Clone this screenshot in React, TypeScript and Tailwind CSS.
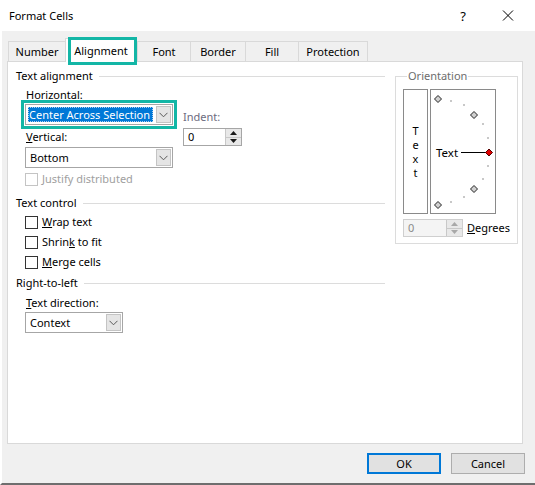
import React from "react";

/**
 * Format Cells dialog — Alignment tab, with teal call-out boxes.
 */

const FONT = { fontFamily: '"Noto Sans", "Open Sans", sans-serif' };

const TABS = [
  { label: "Number", w: "w-[57px]" },
  { label: "Alignment", w: "w-[72px]", active: true },
  { label: "Font", w: "w-[53px]" },
  { label: "Border", w: "w-[55px]" },
  { label: "Fill", w: "w-[53px]" },
  { label: "Protection", w: "w-[70px]", last: true },
];

function Chevron() {
  return (
    <svg width="9" height="6" viewBox="0 0 9 6">
      <path d="M0.5 0.8 L4.5 4.8 L8.5 0.8" fill="none" stroke="#5a5a5a" strokeWidth="1" />
    </svg>
  );
}

function Combo({
  value,
  className,
  selected,
}: {
  value: string;
  className: string;
  selected?: boolean;
}) {
  return (
    <div className={`flex h-[21px] border border-[#a6a6a6] bg-white ${className}`}>
      <div className="flex flex-1 items-center p-[2px]">
        {selected ? (
          <span className="flex h-full flex-1 items-center whitespace-nowrap bg-[#0078d7] pl-[1px] text-white outline-1 outline-dotted outline-[#b0d0f0] -outline-offset-1">
            {value}
          </span>
        ) : (
          <span className="whitespace-nowrap pl-[2px]">{value}</span>
        )}
      </div>
      <div className="m-px flex w-[15px] items-center justify-center border border-[#c4c4c4] bg-[#e5e5e5]">
        <Chevron />
      </div>
    </div>
  );
}

function Arrow({ up, color }: { up?: boolean; color: string }) {
  return (
    <svg width="7" height="4" viewBox="0 0 7 4">
      <path d={up ? "M0 4 L3.5 0 L7 4 Z" : "M0 0 L3.5 4 L7 0 Z"} fill={color} />
    </svg>
  );
}

function Spin({ disabled }: { disabled?: boolean }) {
  const c = disabled ? "#a8a8a8" : "#1a1a1a";
  return (
    <div className="flex w-[16px] flex-col border-l border-[#c8c8c8]">
      <div className="flex flex-1 items-center justify-center border-b border-[#c8c8c8] bg-[#e8e8e8]">
        <Arrow up color={c} />
      </div>
      <div className="flex flex-1 items-center justify-center bg-[#e8e8e8]">
        <Arrow color={c} />
      </div>
    </div>
  );
}

function Heading({ children }: { children: React.ReactNode }) {
  return (
    <div className="flex h-[16px] items-center gap-[6px]">
      <span className="whitespace-nowrap">{children}</span>
      <div className="h-px flex-1 bg-[#dcdcdc]" />
    </div>
  );
}

function Check({ children, disabled }: { children: React.ReactNode; disabled?: boolean }) {
  return (
    <div className="flex h-[20px] items-center gap-[4px]">
      <div
        className={`h-[13px] w-[13px] border bg-white ${
          disabled ? "border-[#c4c4c4]" : "border-[#333333]"
        }`}
      />
      <span className={`whitespace-nowrap ${disabled ? "text-[#a0a0a0]" : ""}`}>{children}</span>
    </div>
  );
}

function Dial() {
  const diamonds = [
    [7, 9],
    [43, 25],
    [43, 99],
    [7, 115],
  ];
  const dots = [
    [20, 11],
    [33, 15],
    [52, 34],
    [57, 48],
    [57, 76],
    [52, 89],
    [33, 107],
    [20, 112],
  ];
  const d = (x: number, y: number) =>
    `M${x} ${y - 3.5} L${x + 3.5} ${y} L${x} ${y + 3.5} L${x - 3.5} ${y} Z`;
  return (
    <svg width="64" height="123" viewBox="0 0 64 123">
      {dots.map(([x, y], i) => (
        <rect key={i} x={x - 1} y={y - 1} width="2" height="2" fill="#c8c8c8" />
      ))}
      {diamonds.map(([x, y], i) => (
        <path key={i} d={d(x, y)} fill="#d0d0d0" stroke="#222" strokeWidth="1" />
      ))}
      <text x="5" y="66.5" fontSize="11.5" fill="#000" style={FONT}>
        Text
      </text>
      <line x1="30" y1="62.5" x2="55" y2="62.5" stroke="#000" strokeWidth="1" />
      <path d={d(58, 62.5)} fill="#e00000" stroke="#500" strokeWidth="1" />
    </svg>
  );
}

export default function App() {
  return (
    <div
      className="flex h-[485px] w-[535px] flex-col border-b-2 border-l-2 border-b-[#6e6e6e] border-l-white bg-[#f0f0f0] text-[11px] leading-[16px] text-black"
      style={FONT}
    >
      {/* Title bar */}
      <div className="flex h-[31px] items-center bg-white pl-[7px]">
        <span>Format Cells</span>
        <div className="ml-auto flex items-center gap-[25px] pr-[17px]">
          <span className="flex w-[20px] justify-center text-[13px]">?</span>
          <svg width="20" height="11" viewBox="0 0 20 11">
            <path d="M5 0.5 L15 10.5 M15 0.5 L5 10.5" stroke="#000" strokeWidth="1" />
          </svg>
        </div>
      </div>

      {/* Tabs */}
      <div className="ml-[6px] mt-[7px] flex h-[23px] items-end">
        {TABS.map((t) =>
          t.active ? (
            <div
              key={t.label}
              className={`relative z-10 -mb-px flex h-[24px] items-center justify-center border-x border-t border-[#d9d9d9] bg-white ${t.w}`}
            >
              {t.label}
              <span className="pointer-events-none absolute left-[2px] top-[-2px] h-[28px] w-[69px] border-[3px] border-[#13b6a6]" />
            </div>
          ) : (
            <div
              key={t.label}
              className={`flex h-[20px] items-center justify-center border-l border-t border-[#d9d9d9] ${
                t.last ? "border-r" : ""
              } ${t.w}`}
            >
              {t.label}
            </div>
          )
        )}
      </div>

      {/* Panel */}
      <div className="ml-[5px] flex h-[383px] w-[516px] border border-[#d9d9d9] bg-white pl-[8px]">
        {/* Left column */}
        <div className="flex w-[369px] flex-col pt-[6px]">
          <Heading>Text alignment</Heading>
          <div className="mt-[3px] flex pl-[9px]">
            <div className="flex w-[148px] flex-col">
              <span className="pl-px">Horizontal:</span>
              <div className="relative mt-px">
                <Combo value="Center Across Selection" className="w-[148px]" selected />
                <span className="pointer-events-none absolute left-[-4px] top-[-4px] h-[29px] w-[156px] border-[3px] border-[#13b6a6]" />
              </div>
              <span className="mt-[4px] pl-px">
                <u>V</u>ertical:
              </span>
              <Combo value="Bottom" className="mt-[2px] w-[148px]" />
              <div className="mt-[1px]">
                <Check disabled>Justify distributed</Check>
              </div>
            </div>
            <div className="ml-[10px] flex flex-col pt-[22px]">
              <span className="text-[#6d6b80]">Indent:</span>
              <div className="mt-[3px] flex h-[18px] w-[59px] border border-[#a6a6a6]">
                <span className="flex flex-1 items-center pl-[4px]">0</span>
                <Spin />
              </div>
            </div>
          </div>

          <div className="mt-[6px]">
            <Heading>Text control</Heading>
          </div>
          <div className="mt-[1px] flex flex-col pl-[9px]">
            <Check>
              <u>W</u>rap text
            </Check>
            <Check>
              Shrin<u>k</u> to fit
            </Check>
            <Check>
              <u>M</u>erge cells
            </Check>
          </div>

          <div className="mt-[3px]">
            <Heading>Right-to-left</Heading>
          </div>
          <div className="mt-[4px] flex flex-col pl-[9px]">
            <span className="pl-px">
              <u>T</u>ext direction:
            </span>
            <Combo value="Context" className="mt-px w-[98px]" />
          </div>
        </div>

        {/* Orientation */}
        <fieldset className="ml-[10px] mt-[6px] h-[176px] w-[120px] self-start border border-[#dcdcdc] px-[7px] pb-[6px]">
          <legend className="ml-[4px] px-px text-[#6d6d6d]">Orientation</legend>
          <div className="mt-[5px] flex gap-[2px]">
            <div className="flex h-[125px] w-[25px] flex-col items-center justify-center border border-[#8a8a8a]">
              <span className="leading-[14px]">T</span>
              <span className="leading-[14px]">e</span>
              <span className="leading-[14px]">x</span>
              <span className="leading-[14px]">t</span>
            </div>
            <div className="h-[125px] w-[66px] border border-[#8a8a8a]">
              <Dial />
            </div>
          </div>
          <div className="mt-[5px] flex items-center gap-[4px]">
            <div className="flex h-[18px] w-[60px] border border-[#cfcfcf] bg-[#f4f4f4]">
              <span className="flex flex-1 items-center pl-[4px] text-[#8a8a8a]">0</span>
              <Spin disabled />
            </div>
            <span>
              <u>D</u>egrees
            </span>
          </div>
        </fieldset>
      </div>

      {/* Footer */}
      <div className="mt-[9px] flex justify-end gap-[10px] pr-[10px]">
        <button className="h-[21px] w-[74px] border-2 border-[#0078d7] bg-[#e1e1e1]">OK</button>
        <button className="h-[21px] w-[74px] border border-[#adadad] bg-[#e1e1e1]">Cancel</button>
      </div>
    </div>
  );
}
